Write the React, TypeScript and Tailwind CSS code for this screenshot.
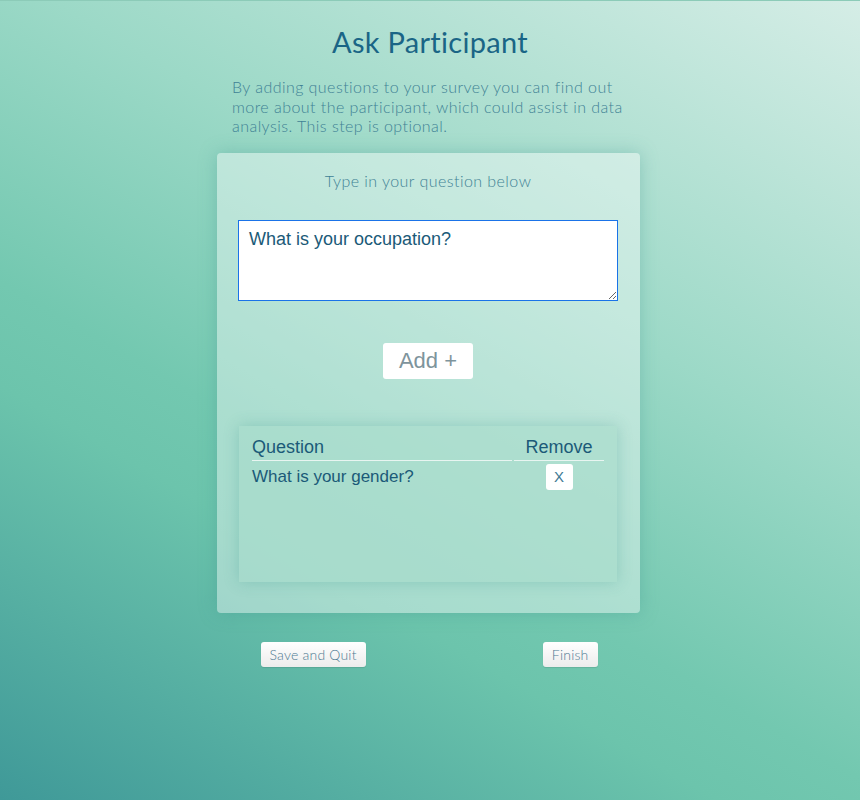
import React, { useState } from "react";

const raleway = { fontFamily: "Lato, 'Open Sans', sans-serif" };

const App = () => {
  const [question, setQuestion] = useState("What is your occupation?");
  const [questions] = useState<string[]>(["What is your gender?"]);

  return (
    <div
      className="min-h-[800px] w-full border-t border-[#8ccbb8] bg-[linear-gradient(30deg,#3f9998_0%,#6cc4ac_32%,#73c8b0_40%,#9cd9c7_64%,#d5ede6_100%)]"
      style={raleway}
    >
      <div className="mx-auto flex w-[428px] flex-col items-center pt-[23px]">
        <h1 className="text-[29px] leading-[36px] tracking-[0.3px] text-[#1a6586]">Ask Participant</h1>
        <p className="mt-[17px] w-[404px] pl-[4px] text-[16px] font-light leading-[19.5px] tracking-[0.45px] text-[#3f8295]">
          By adding questions to your survey you can find out more about the participant, which could assist in data analysis. This step is optional.
        </p>

        <div className="mr-[4px] mt-[17px] flex h-[460px] w-[423px] flex-col items-center rounded-[4px] bg-white/40 px-[22px] pt-[18px] shadow-[0_0_18px_rgba(60,150,140,0.35)]">
          <div className="text-[16px] font-light leading-[20px] tracking-[0.45px] text-[#3f8295]">Type in your question below</div>

          <textarea
            value={question}
            onChange={(e) => setQuestion(e.target.value)}
            className="mt-[29px] h-[81px] w-[380px] resize-y border border-[#1a73e8] bg-white px-[10px] py-[8px] text-[18px] leading-[21px] text-[#1b5a78] outline-none"
            style={{ fontFamily: "'Liberation Sans', Arial, sans-serif" }}
          />

          <button
            className="mt-[42px] h-[36px] w-[90px] rounded-[3px] bg-white text-[22px] text-[#7e949c]"
            style={{ fontFamily: "'Liberation Sans', Arial, sans-serif" }}
          >
            Add +
          </button>

          <div
            className="mt-[47px] h-[156px] w-[378px] bg-[#a8dccb]/60 px-[11px] pt-[9px] shadow-[0_0_14px_rgba(60,150,140,0.3)]"
            style={{ fontFamily: "'Liberation Sans', Arial, sans-serif" }}
          >
            <table className="w-full border-separate border-spacing-x-[2px] border-spacing-y-0 text-[18px] text-[#1b5a78]">
              <thead>
                <tr>
                  <th className="border-b border-[#e8f5f1] pb-[1px] text-left font-normal leading-[24px]">Question</th>
                  <th className="w-[90px] border-b border-[#e8f5f1] pb-[1px] text-center font-normal leading-[24px]">Remove</th>
                </tr>
              </thead>
              <tbody>
                {questions.map((q, i) => (
                  <tr key={i}>
                    <td className="pt-[4px] align-top text-[17px] leading-[24px]">{q}</td>
                    <td className="pt-[2px] text-center align-top">
                      <button className="h-[26px] w-[27px] rounded-[3px] bg-white text-[15px] text-[#3f7a95]">X</button>
                    </td>
                  </tr>
                ))}
              </tbody>
            </table>
          </div>
        </div>

        <div className="mr-[2px] mt-[29px] flex w-[337px] items-center justify-between">
          <button className="h-[25px] rounded-[3px] bg-[linear-gradient(#ffffff,#ececec)] px-[9px] text-[14px] font-light tracking-[0.2px] text-[#4f7a93] shadow-[0_1px_1px_rgba(0,0,0,0.1)]">
            Save and Quit
          </button>
          <button className="h-[25px] rounded-[3px] bg-[linear-gradient(#ffffff,#ececec)] px-[9px] text-[14px] font-light tracking-[0.2px] text-[#4f7a93] shadow-[0_1px_1px_rgba(0,0,0,0.1)]">
            Finish
          </button>
        </div>
      </div>
    </div>
  );
};

export default App;
